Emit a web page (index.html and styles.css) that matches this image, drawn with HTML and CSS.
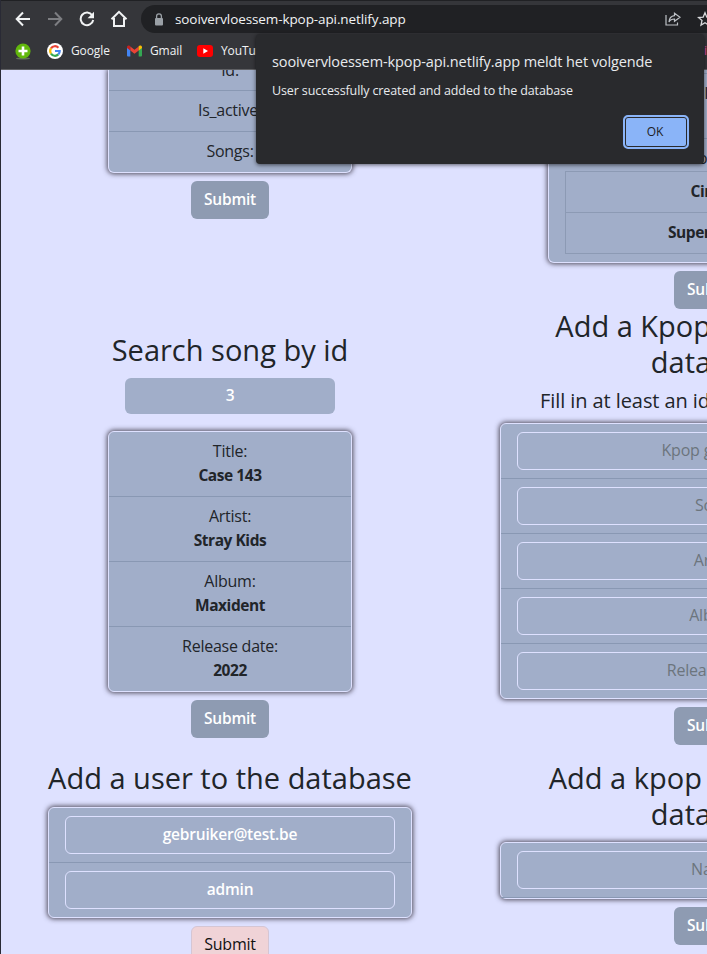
FILE: index.html
```html
<!DOCTYPE html>
<html lang="en">
<head>
<meta charset="utf-8">
<title>Kpop API</title>
<link rel="stylesheet" href="styles.css">
</head>
<body>
<header class="browser">
  <div class="toolbar">
    <svg class="nav" width="16" height="16" viewBox="0 0 16 16"><path d="M15 8H2M8 1.5 1.7 8 8 14.5" fill="none" stroke="#f1f3f4" stroke-width="2"/></svg>
    <svg class="nav" width="16" height="16" viewBox="0 0 16 16"><path d="M1 8h13M8 1.5 14.3 8 8 14.5" fill="none" stroke="#7d7e82" stroke-width="2"/></svg>
    <svg class="nav" width="16" height="16" viewBox="0 0 16 16"><path d="M13.2 4.3A6.3 6.3 0 1 0 14.2 9" fill="none" stroke="#f1f3f4" stroke-width="2"/><path d="M15 .8v6.4H8.6z" fill="#f1f3f4"/></svg>
    <svg class="nav home" width="18" height="18" viewBox="0 0 18 18"><path d="M1.5 9.3 9 1.8l7.5 7.5M4 8v8h10V8" fill="none" stroke="#f1f3f4" stroke-width="2"/></svg>
    <div class="omnibox">
      <svg width="10" height="13" viewBox="0 0 10 13"><rect x="1" y="5" width="8" height="7.5" rx="1" fill="#9aa0a6"/><path d="M2.6 5V3.2a2.4 2.4 0 0 1 4.8 0V5" fill="none" stroke="#9aa0a6" stroke-width="1.3"/></svg>
      <span class="url">sooivervloessem-kpop-api.netlify.app</span>
      <svg class="share" width="16" height="14" viewBox="0 0 16 14"><path d="M1 3v10h11.500v-2.500" fill="none" stroke="#bdc1c6" stroke-width="1.2"/><path d="M9.500 1.200 15 5.300l-5.500 4V7C6.800 7 5 8 4 10c.2-3.500 2.200-6 5.500-6.400z" fill="none" stroke="#bdc1c6" stroke-width="1.200"/></svg>
      <svg class="star" width="16" height="16" viewBox="0 0 16 16"><path d="m8 1.800 1.800 4.300 4.700.4-3.500 3 1 4.600L8 11.700l-4 2.400 1-4.600-3.500-3 4.700-.4z" fill="none" stroke="#d5d7da" stroke-width="1.300"/></svg>
    </div>
  </div>
  <div class="bookmarks">
    <svg class="plus" width="16" height="17" viewBox="0 0 16 17"><ellipse cx="8" cy="15.500" rx="7" ry="1" fill="#62705a"/><circle cx="8" cy="8" r="7.600" fill="#62b80c"/><path d="M8 3.500v9M3.500 8h9" stroke="#fff" stroke-width="2.600"/></svg>
    <svg class="goog" width="16" height="16" viewBox="0 0 16 16"><circle cx="8" cy="8" r="8" fill="#fff"/><g fill="none" stroke-width="2.200"><path d="M4 5.400A4.700 4.700 0 0 1 11.400 4.700" stroke="#ea4335"/><path d="M4 5.400a4.700 4.700 0 0 0 0 5.200" stroke="#fbbc05"/><path d="M4 10.600a4.700 4.700 0 0 0 7.300.8" stroke="#34a853"/><path d="M11.300 11.400A4.700 4.700 0 0 0 12.700 8H8" stroke="#4285f4"/></g></svg>
    <span class="bm-google">Google</span>
    <svg class="mail" width="15" height="12" viewBox="0 0 15 12"><path d="M0 2h3.300v9.500H1a1 1 0 0 1-1-1z" fill="#4285f4"/><path d="M11.700 2H15v8.500a1 1 0 0 1-1 1h-2.300z" fill="#34a853"/><path d="M3.300 1.500 7.500 4.700l4.200-3.200v4L7.500 8.700 3.300 5.500z" fill="#ea4335"/><path d="M0 2C0 .5 2-.2 3.300 1v4.500L0 3z" fill="#c5221f"/><path d="M15 2c0-1.500-2-2.200-3.300-1v4.500L15 3z" fill="#fbbc04"/></svg>
    <span class="bm-gmail">Gmail</span>
    <svg class="tube" width="16" height="12" viewBox="0 0 16 12"><rect width="16" height="12" rx="3" fill="#f00"/><path d="M6.300 3.200v5.600L11 6z" fill="#fff"/></svg>
    <span>YouTube</span>
    <span class="bm-last">i</span>
  </div>
</header>

<main class="page">
  <section class="column left">
    <div class="card narrow cut">
      <div class="row clipped">Id:</div>
      <div class="row">Is_active:</div>
      <div class="row">Songs:</div>
    </div>
    <button class="submit">Submit</button>

    <h2 class="search-title">Search song by id</h2>
    <input class="search" value="3">
    <div class="card narrow">
      <div class="row">Title:<b>Case 143</b></div>
      <div class="row">Artist:<b>Stray Kids</b></div>
      <div class="row">Album:<b>Maxident</b></div>
      <div class="row">Release date:<b>2022</b></div>
    </div>
    <button class="submit">Submit</button>

    <h2 class="user-title">Add a user to the database</h2>
    <div class="card user">
      <div class="row"><input value="gebruiker@test.be"></div>
      <div class="row"><input value="admin"></div>
    </div>
    <button class="submit pressed">Submit</button>
  </section>

  <section class="column right">
    <div class="card group cut">
      <div class="spacer"></div>
      <div class="row tall">Id:</div>
      <div class="row songs">Songs:
        <div class="song-list"><b>Circus</b><b>Super Board</b></div>
      </div>
    </div>
    <button class="submit">Submit</button>

    <h2 class="song-title">Add a Kpop song to the<br>database</h2>
    <p class="hint">Fill in at least an id, a song and an artist</p>
    <div class="card wide">
      <div class="row"><input placeholder="Kpop group id"></div>
      <div class="row"><input placeholder="Song"></div>
      <div class="row"><input placeholder="Artist"></div>
      <div class="row"><input placeholder="Album"></div>
      <div class="row"><input placeholder="Release date"></div>
    </div>
    <button class="submit">Submit</button>

    <h2 class="group-title">Add a kpop group to the<br>database</h2>
    <div class="card wide single">
      <div class="row"><input placeholder="Name"></div>
    </div>
    <button class="submit">Submit</button>
  </section>
</main>

<div class="dialog" role="alertdialog">
  <div class="dialog-title">sooivervloessem-kpop-api.netlify.app meldt het volgende</div>
  <div class="dialog-text">User successfully created and added to the database</div>
  <button class="ok">OK</button>
</div>
</body>
</html>
```
FILE: styles.css
```css
* { box-sizing: border-box; }

html, body { height: 954px; overflow: hidden; }

body {
  margin: 0;
  width: 707px;
  background: #dee1ff;
  border-left: 1px solid #292a35;
  color: #212529;
  font: 16px/24px "Open Sans", "Noto Sans", sans-serif;
  letter-spacing: -.25px;
}

svg { flex: none; display: block; }

/* Browser chrome */
.browser {
  height: 70px;
  background: #35363a;
  border-top: 1px solid #202124;
  border-bottom: 1px solid #5f6064;
  color: #f1f3f4;
  overflow: hidden;
}
.toolbar { display: flex; align-items: center; height: 36px; padding-left: 14px; }
.nav { margin-right: 16px; }
.home { margin: 0 13px 0 -1px; }
.omnibox {
  display: flex;
  align-items: center;
  flex: none;
  width: 640px;
  height: 28px;
  padding-left: 13px;
  border-radius: 14px;
  background: #202124;
}
.url { width: 491px; margin-left: 11px; font-size: 13.500px; letter-spacing: -.1px; }
.share { margin-left: -1px; }
.star { margin-left: 16px; }
.bookmarks { display: flex; align-items: center; height: 28px; padding-left: 14px; font-size: 12px; letter-spacing: -.1px; }
.goog { margin: 0 8px 0 16px; }
.bm-google { width: 56px; }
.mail { margin-right: 8px; }
.bm-gmail { width: 47px; }
.tube { margin-right: 8px; }
.bm-last { margin-left: auto; color: #e8489a; }

/* Page */
.page { position: relative; display: flex; height: 884px; overflow: hidden; }
.column { display: flex; flex-direction: column; align-items: center; flex: none; }
.left { width: 458px; }
.right { width: 426px; margin-left: 41px; }
.column > * { flex: none; }

.card {
  border: 1px solid #dee1ff;
  border-radius: 6px;
  background: #a1aec9;
  box-shadow: 0 0 5px 1px #35303ed9;
  text-align: center;
}
.card.cut { border-top: 0; border-radius: 0 0 6px 6px; }
.narrow { width: 244px; }
.user { width: 364px; }
.wide { width: 426px; }
.group { width: 330px; }

.row { padding: 7px 16px 9px; border-bottom: 1px solid #8998b3; }
.user .row, .wide .row { padding: 8px 16px; }
.row:last-child { border-bottom: 0; }
.single .row:last-child { border-bottom: 1px solid #8998b3; }
.row.clipped { height: 21px; padding-top: 0; line-height: 0; }
.row b { display: block; font-size: 15.500px; letter-spacing: -.45px; }
.spacer { height: 4px; border-bottom: 1px solid #8998b3; }
.tall { height: 65px; }
.songs { padding-bottom: 8px; }
.song-list { margin-top: 1px; border: 1px solid #8c9ab4; }
.song-list b { padding: 7px 0 9px; }
.song-list b + b { border-top: 1px solid #8c9ab4; }

input {
  display: block;
  width: 100%;
  height: 38px;
  padding: 5px 12px 7px;
  border: 1px solid #dee1ff;
  border-radius: 6px;
  background: transparent;
  color: #fff;
  font: 600 15.500px/24px "Open Sans", "Noto Sans", sans-serif;
  letter-spacing: -.2px;
  text-align: center;
}
input::placeholder { color: #6c757d; font-size: 16px; font-weight: 400; opacity: 1; }
.search { width: 210px; height: 36px; margin: 10px 0 17px; border: 0; background: #a1aec9; }

.submit {
  width: 78px;
  height: 38px;
  margin-top: 8px;
  padding: 0 0 2px;
  border: 0;
  border-radius: 6px;
  background: #8e9bb2;
  color: #fff;
  font: 600 15.500px/24px "Open Sans", "Noto Sans", sans-serif;
  letter-spacing: -.2px;
}
.pressed { border: 1px solid #d5c6d4; background: #f0d3d7; color: #111; font-size: 16px; font-weight: 400; }

h2 { margin: 0; font-size: 29px; font-weight: 400; line-height: 36px; letter-spacing: 0; text-align: center; white-space: nowrap; }
.search-title { margin-top: 113px; }
.user-title { margin: 22px 0 11px; }
.song-title { margin: -1px 0 1px; }
.group-title { margin: 15px 0 10px; }
.hint { width: 346px; margin: 8px 0 10px; font-size: 20px; line-height: 24px; letter-spacing: -.08px; white-space: nowrap; }

/* JavaScript alert */
.dialog {
  position: absolute;
  left: 256px;
  top: 34px;
  display: flex;
  flex-direction: column;
  width: 448px;
  height: 130px;
  padding: 16px 15px 15px 16px;
  border-radius: 4px;
  background: #292a2d;
  box-shadow: 0 1px 4px #0009;
  color: #e8eaed;
  white-space: nowrap;
}
.dialog-title { font-size: 14.500px; line-height: 24px; letter-spacing: -.1px; }
.dialog-text { margin-top: 7px; font-size: 12.500px; line-height: 20px; letter-spacing: -.12px; }
.ok {
  align-self: flex-end;
  width: 66px;
  height: 34px;
  margin-top: 14px;
  padding: 0 2px 2px 0;
  border: 2px solid #8ab4f8;
  border-radius: 5px;
  background: #8ab4f8;
  box-shadow: inset 0 0 0 1px #292a2d;
  color: #202124;
  font: 12px "Open Sans", "Noto Sans", sans-serif;
}
```
